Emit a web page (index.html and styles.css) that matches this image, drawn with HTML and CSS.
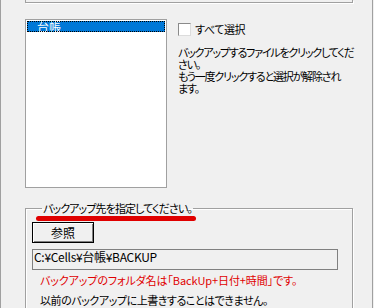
FILE: index.html
```html
<!DOCTYPE html>
<html lang="ja">
  <head>
    <meta charset="UTF-8" />
    <meta name="viewport" content="width=device-width, initial-scale=1.0" />
    <title>バックアップ</title>
    <link rel="stylesheet" href="styles.css">
  </head>
  <body>
    <div class="window">
      <div class="top-group"></div>
      <div class="main">
        <div class="listbox">
          <div class="item selected">台帳</div>
        </div>
        <div class="side">
          <label class="check">
            <span class="box"></span>
            <span>すべて選択</span>
          </label>
          <p class="note">
            バックアップするファイルをクリックしてくだ<br>さい。<br>もう一度クリックすると選択が解除され<br>ます。
          </p>
        </div>
      </div>
      <fieldset class="group">
        <legend>バックアップ先を指定してください。</legend>
        <button class="browse">参照</button>
        <div class="path">C:¥Cells¥台帳¥BACKUP</div>
        <p class="warn">バックアップのフォルダ名は「BackUp+日付+時間」です。</p>
        <p class="info">以前のバックアップに上書きすることはできません。<br>必要に応じて古いバックアップを削除してください。</p>
      </fieldset>
    </div>
  </body>
</html>
```

FILE: styles.css
```css
* {
  margin: 0;
  box-sizing: border-box;
}
html {
  font-size: 11px;
}
body {
  background-color: #f0f0f0;
  font-family: "Noto Sans CJK JP", "Noto Sans", sans-serif;
  font-feature-settings: "palt";
  color: #000;
  overflow: hidden;
}
.window {
  width: 373px;
  height: 308px;
  border-left: 1px solid #a0a0a0;
  border-right: 1px solid #a0a0a0;
  overflow: hidden;
  padding-left: 24px;
  padding-right: 19px;
}
.top-group {
  width: 328px;
  height: 3px;
  border: 1px solid #a0a0a0;
  border-top: none;
  box-shadow: 1px 1px 0 #fff;
}
.main {
  display: flex;
  margin-top: 16px;
}
.listbox {
  flex-shrink: 0;
  width: 142px;
  height: 169px;
  background: #fff;
  border: 1px solid #a0a0a0;
  padding: 1px;
}
.item {
  height: 11px;
  line-height: 11px;
  padding-left: 10px;
  font-size: 12px;
}
.selected {
  background: #0078d7;
  color: #fff;
  outline: 1px dotted #000;
  outline-offset: -1px;
}
.side {
  flex-shrink: 0;
  margin-left: 11px;
  padding-top: 4px;
}
.check {
  display: flex;
  align-items: center;
  gap: 4px;
  height: 13px;
  line-height: 13px;
  letter-spacing: -0.4px;
}
.box {
  width: 13px;
  height: 13px;
  background: #fff;
  border: 1px solid #8a8a8a;
  border-right-color: #dcdcdc;
  border-bottom-color: #dcdcdc;
}
.note {
  margin-top: 10px;
  line-height: 12px;
  white-space: nowrap;
  letter-spacing: -1.2px;
}
.group {
  width: 328px;
  margin: 14px 0 0;
  padding: 0 0 0 6px;
  border: 1px solid #a0a0a0;
  box-shadow: 1px 1px 0 #fff inset, 1px 1px 0 #fff;
}
.group legend {
  position: relative;
  margin-left: 10px;
  padding: 0 1px;
  line-height: 12px;
  letter-spacing: -0.9px;
}
.group legend::after {
  content: "";
  position: absolute;
  left: -6px;
  right: -3px;
  bottom: -7px;
  height: 5px;
  border-radius: 3px;
  background: #e00000;
}
.browse {
  display: block;
  width: 62px;
  height: 21px;
  margin-top: 8px;
  font: inherit;
  font-size: 12px;
  background: #f0f0f0;
  border: 1px solid #000;
  box-shadow: inset 1px 1px 0 #fff, inset -1px -1px 0 #808080;
}
.path {
  width: 306px;
  height: 21px;
  margin-top: 6px;
  padding-left: 1px;
  border: 1px solid #808080;
  line-height: 13px;
  font-size: 12px;
  letter-spacing: -0.3px;
}
.warn {
  margin-top: 3px;
  padding-left: 8px;
  color: #e00000;
  line-height: 14px;
  letter-spacing: -0.1px;
}
.info {
  margin-top: 6px;
  padding-left: 8px;
  line-height: 14px;
  letter-spacing: -0.45px;
}
```
